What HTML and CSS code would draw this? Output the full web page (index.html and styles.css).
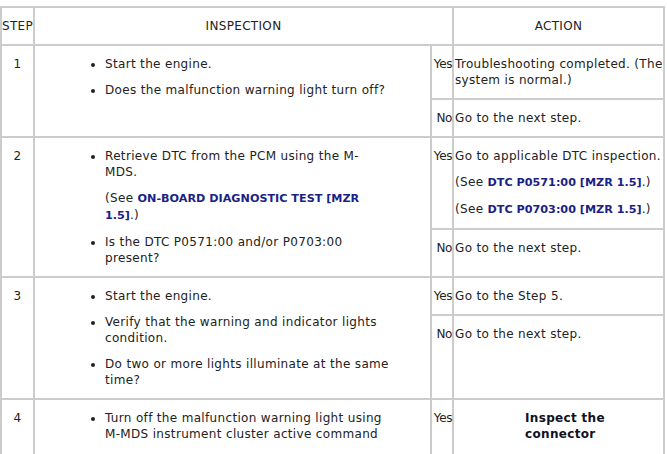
FILE: index.html
```html
<!DOCTYPE html>
<html lang="en">
<head>
<meta charset="utf-8">
<title>Troubleshooting</title>
<link rel="stylesheet" href="styles.css">
</head>
<body>
<div class="table">
  <div class="row head">
    <div class="cell">STEP</div>
    <div class="cell">INSPECTION</div>
    <div class="cell">ACTION</div>
  </div>

  <div class="row">
    <div class="cell step"><p>1</p></div>
    <div class="cell insp">
      <ul>
        <li><p>Start the engine.</p></li>
        <li><p>Does the malfunction warning light turn off?</p></li>
      </ul>
    </div>
    <div class="branches">
      <div class="branch">
        <div class="cell yn"><p>Yes</p></div>
        <div class="cell act"><p>Troubleshooting completed. (The system is normal.)</p></div>
      </div>
      <div class="branch grow">
        <div class="cell yn"><p>No</p></div>
        <div class="cell act"><p>Go to the next step.</p></div>
      </div>
    </div>
  </div>

  <div class="row">
    <div class="cell step"><p>2</p></div>
    <div class="cell insp">
      <ul>
        <li>
          <p>Retrieve DTC from the PCM using the M-MDS.</p>
          <p>(See <a class="ref" href="#">ON-BOARD DIAGNOSTIC TEST [MZR 1.5]</a>.)</p>
        </li>
        <li><p>Is the DTC P0571:00 and/or P0703:00 present?</p></li>
      </ul>
    </div>
    <div class="branches">
      <div class="branch">
        <div class="cell yn"><p>Yes</p></div>
        <div class="cell act">
          <p>Go to applicable DTC inspection.</p>
          <p>(See <a class="ref" href="#">DTC P0571:00 [MZR 1.5]</a>.)</p>
          <p>(See <a class="ref" href="#">DTC P0703:00 [MZR 1.5]</a>.)</p>
        </div>
      </div>
      <div class="branch grow">
        <div class="cell yn"><p>No</p></div>
        <div class="cell act"><p>Go to the next step.</p></div>
      </div>
    </div>
  </div>

  <div class="row">
    <div class="cell step"><p>3</p></div>
    <div class="cell insp">
      <ul>
        <li><p>Start the engine.</p></li>
        <li><p>Verify that the warning and indicator lights condition.</p></li>
        <li><p>Do two or more lights illuminate at the same time?</p></li>
      </ul>
    </div>
    <div class="branches">
      <div class="branch">
        <div class="cell yn"><p>Yes</p></div>
        <div class="cell act"><p>Go to the Step 5.</p></div>
      </div>
      <div class="branch grow">
        <div class="cell yn"><p>No</p></div>
        <div class="cell act"><p>Go to the next step.</p></div>
      </div>
    </div>
  </div>

  <div class="row last">
    <div class="cell step"><p>4</p></div>
    <div class="cell insp">
      <ul>
        <li><p>Turn off the malfunction warning light using M-MDS instrument cluster active command</p></li>
      </ul>
    </div>
    <div class="branches">
      <div class="branch grow">
        <div class="cell yn"><p>Yes</p></div>
        <div class="cell act"><p class="task">Inspect the connector</p></div>
      </div>
    </div>
  </div>
</div>
</body>
</html>
```

FILE: styles.css
```css
html {
  overflow: hidden;
}

body {
  margin: 0;
  background: #ffffff;
  font-family: "DejaVu Sans", Verdana, sans-serif;
  font-size: 12px;
  line-height: 16px;
  letter-spacing: 0.33px;
  color: #222222;
}

.table {
  margin-top: 6px;
  width: 665px;
  box-sizing: border-box;
  padding: 2px;
  background: #cccccc;
  display: flex;
  flex-direction: column;
  gap: 2px;
}

.row {
  display: grid;
  grid-template-columns: 31px 395px 231px;
  gap: 2px;
}

.row.head {
  grid-template-columns: 31px 417px 209px;
}

.row.last {
  min-height: 80px;
}

.cell {
  background: #ffffff;
  min-width: 0;
}

.head .cell {
  text-align: center;
  padding: 10px 0;
  white-space: nowrap;
}

.cell p {
  margin: 10px 0;
}

.step {
  text-align: center;
}

.insp {
  padding: 0 40px 0 30px;
}

.insp ul {
  margin: 0;
  padding-left: 40px;
}

.branches {
  display: flex;
  flex-direction: column;
  gap: 2px;
}

.branch {
  display: grid;
  grid-template-columns: 20px 209px;
  gap: 2px;
}

.branch.grow {
  flex: 1;
}

.yn {
  text-align: right;
  letter-spacing: -0.4px;
  white-space: nowrap;
}

.act {
  padding-left: 1px;
}

.ref {
  color: #1b1f86;
  font-weight: bold;
  font-size: 11.2px;
  letter-spacing: 0;
  text-decoration: none;
}

.task {
  font-weight: bold;
  color: #111122;
  padding-left: 70px;
}
```
